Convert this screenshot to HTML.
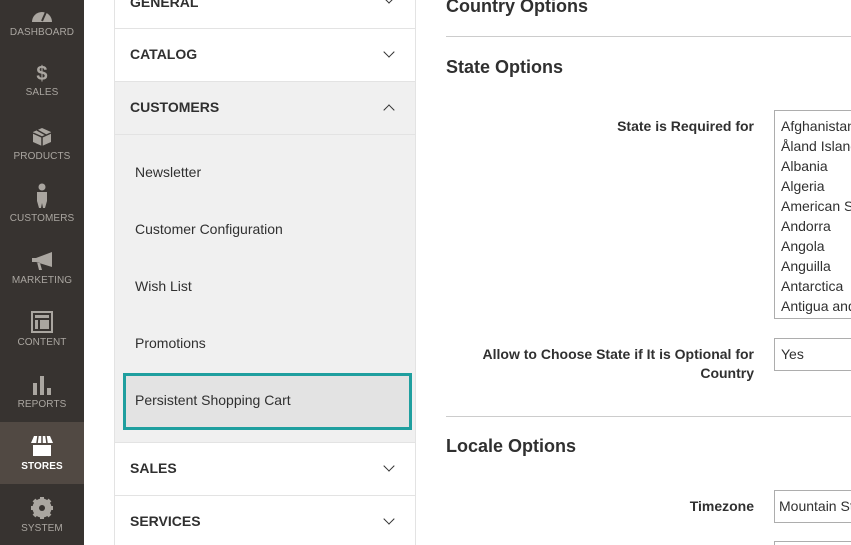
<!DOCTYPE html>
<html><head><meta charset="utf-8"><style>
*{margin:0;padding:0;box-sizing:border-box}
html,body{width:851px;height:545px;overflow:hidden}
body{background:#fff;font-family:"Liberation Sans",sans-serif;color:#303030;position:relative}
.side{position:absolute;left:0;top:0;width:84px;height:545px;background:#373330}
.nav{position:absolute;left:0;width:84px;text-align:center;color:#aaa6a0;font-size:10px;letter-spacing:.1px}
.nav svg{display:block;margin:0 auto 4px}
.act{background:#514943;color:#fff;font-weight:bold}
.panel{position:absolute;left:114px;top:0;width:302px;height:545px;border-left:1px solid #e3e3e3;border-right:1px solid #e3e3e3;overflow:hidden}
.row{position:absolute;left:0;width:300px;border-bottom:1px solid #e3e3e3;font-weight:bold;font-size:14px;color:#303030;padding-left:15px}
.chev{position:absolute;right:22px;width:8px;height:8px;border-right:1.4px solid #333;border-bottom:1.4px solid #333}
.sub{position:absolute;left:20px;font-size:14px;color:#303030}
h2{position:absolute;left:446px;font-size:18px;font-weight:bold;color:#303030}
.hr{position:absolute;left:446px;width:405px;height:1px;background:#ccc}
.lbl{position:absolute;right:97px;text-align:right;font-weight:bold;font-size:14px;line-height:19px}
.inp{position:absolute;left:774px;width:77px;border:1px solid #adadad;border-right:none;font-size:14px;padding-left:6px;white-space:nowrap;overflow:hidden}
</style></head><body>
<div class="side">
 <div class="nav" style="top:7px"><svg width="22" height="16" viewBox="0 0 22 16"><path d="M1 15A10 10 0 0 1 21 15Z" fill="#aaa6a0"/><path d="M11 14L15 5" stroke="#373330" stroke-width="2"/></svg>DASHBOARD</div>
 <div class="nav" style="top:64px"><div style="font-size:20px;font-weight:bold;line-height:20px;margin-bottom:3px">$</div>SALES</div>
 <div class="nav" style="top:127px"><svg width="20" height="20" viewBox="0 0 20 20"><path d="M10 1L19 5V15L10 19L1 15V5Z" fill="#aaa6a0"/><path d="M1 6L10 10L19 6M10 10V19M5 3L14 8" stroke="#373330" stroke-width="1.5" fill="none"/></svg>PRODUCTS</div>
 <div class="nav" style="top:183px"><svg width="14" height="26" viewBox="0 0 14 26"><circle cx="7" cy="4" r="3.5" fill="#aaa6a0"/><path d="M2 9H12V18L10 25H8L7 20L6 25H4L2 18Z" fill="#aaa6a0"/></svg>CUSTOMERS</div>
 <div class="nav" style="top:251px"><svg width="24" height="20" viewBox="0 0 24 20"><path d="M2 7H6L22 1V16L6 11H2Z M7 11L9 19H12L10 12Z" fill="#aaa6a0"/></svg>MARKETING</div>
 <div class="nav" style="top:311px"><svg width="22" height="22" viewBox="0 0 22 22"><rect x="1" y="1" width="20" height="20" fill="none" stroke="#aaa6a0" stroke-width="2"/><rect x="4" y="4" width="14" height="3" fill="#aaa6a0"/><rect x="4" y="9" width="3" height="9" fill="#aaa6a0"/><rect x="9" y="9" width="9" height="9" fill="#aaa6a0"/></svg>CONTENT</div>
 <div class="nav" style="top:375px"><svg width="20" height="20" viewBox="0 0 20 20"><rect x="1" y="8" width="4" height="12" fill="#aaa6a0"/><rect x="8" y="1" width="4" height="19" fill="#aaa6a0"/><rect x="15" y="13" width="4" height="7" fill="#aaa6a0"/></svg>REPORTS</div>
 <div class="nav act" style="top:422px;height:62px;padding-top:13px"><svg width="24" height="22" viewBox="0 0 24 22"><path d="M4 1H20L23 8H1Z" fill="#fff"/><path d="M8 1L7 8M12 1V8M16 1L17 8" stroke="#514943" stroke-width="1.5"/><rect x="3" y="10" width="18" height="11" fill="#fff"/></svg>STORES</div>
 <div class="nav" style="top:497px"><svg width="22" height="22" viewBox="0 0 22 22"><circle cx="11" cy="11" r="7" fill="none" stroke="#aaa6a0" stroke-width="5"/><path d="M11 0V22M0 11H22M3 3L19 19M19 3L3 19" stroke="#aaa6a0" stroke-width="4"/><circle cx="11" cy="11" r="3" fill="#373330"/></svg>SYSTEM</div>
</div>
<div class="panel">
 <div class="row" style="top:-20px;height:49px;line-height:44px">GENERAL<span class="chev" style="top:14px;transform:rotate(45deg)"></span></div>
 <div class="row" style="top:29px;height:53px;line-height:51px">CATALOG<span class="chev" style="top:19px;transform:rotate(45deg)"></span></div>
 <div class="row" style="top:82px;height:53px;line-height:51px;background:#f0f0f0">CUSTOMERS<span class="chev" style="top:24px;transform:rotate(225deg)"></span></div>
 <div style="position:absolute;left:0;top:135px;width:300px;height:308px;background:#f0f0f0;border-bottom:1px solid #e3e3e3"></div>
 <div class="sub" style="top:164px">Newsletter</div>
 <div class="sub" style="top:221px">Customer Configuration</div>
 <div class="sub" style="top:278px">Wish List</div>
 <div class="sub" style="top:335px">Promotions</div>
 <div style="position:absolute;left:8px;top:373px;width:289px;height:57px;border:3px solid #1f9f9f;background:#e3e3e3"></div>
 <div class="sub" style="top:392px">Persistent Shopping Cart</div>
 <div class="row" style="top:443px;height:53px;line-height:51px">SALES<span class="chev" style="top:19px;transform:rotate(45deg)"></span></div>
 <div class="row" style="top:496px;height:49px;line-height:51px;border-bottom:none">SERVICES<span class="chev" style="top:19px;transform:rotate(45deg)"></span></div>
</div>
<h2 style="top:-4px">Country Options</h2>
<div class="hr" style="top:36px"></div>
<h2 style="top:57px">State Options</h2>
<div class="lbl" style="top:117px">State is Required for</div>
<div class="inp" style="top:110px;height:209px;line-height:20px;padding-top:5px">Afghanistan<br>Åland Islands<br>Albania<br>Algeria<br>American Samoa<br>Andorra<br>Angola<br>Anguilla<br>Antarctica<br>Antigua and</div>
<div class="lbl" style="top:345px">Allow to Choose State if It is Optional for<br>Country</div>
<div class="inp" style="top:338px;height:33px;line-height:31px">Yes</div>
<div class="hr" style="top:416px"></div>
<h2 style="top:436px">Locale Options</h2>
<div class="lbl" style="top:497px">Timezone</div>
<div class="inp" style="top:490px;height:33px;line-height:31px;padding-left:4px">Mountain Standard</div>
<div class="inp" style="top:541px;height:4px;border-bottom:none"></div>
</body></html>
